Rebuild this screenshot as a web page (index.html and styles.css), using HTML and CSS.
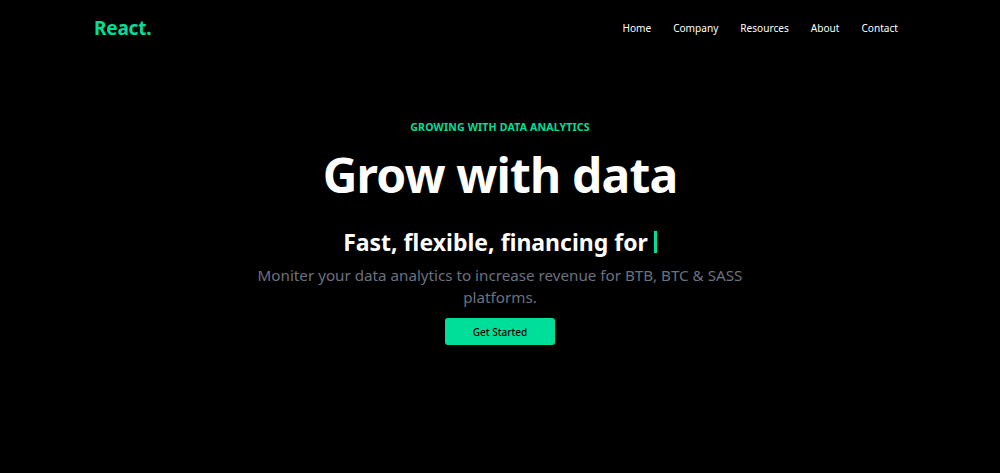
FILE: index.html
```html
<!DOCTYPE html>
<html>
<head>
<meta charset="utf-8">
<link rel="stylesheet" href="styles.css">
</head>
<body>
<header class="nav">
  <h1 class="logo">React.</h1>
  <ul class="links">
    <li>Home</li>
    <li>Company</li>
    <li>Resources</li>
    <li>About</li>
    <li>Contact</li>
  </ul>
</header>
<main class="hero">
  <p class="eyebrow">GROWING WITH DATA ANALYTICS</p>
  <h2 class="title">Grow with data</h2>
  <div class="sub">Fast, flexible, financing for <span class="cursor"></span></div>
  <p class="desc">Moniter your data analytics to increase revenue for BTB, BTC &amp; SASS platforms.</p>
  <button class="cta">Get Started</button>
</main>
</body>
</html>
```
FILE: styles.css
```css
* { box-sizing: border-box; }
html, body { margin: 0; padding: 0; background: #000; height: 100%; }
body { font-family: "Noto Sans", "Open Sans", sans-serif; color: #fff; }
.nav {
  display: flex;
  justify-content: space-between;
  align-items: center;
  height: 55px;
  padding: 0 102px 0 94px;
}
.logo {
  margin: 0;
  color: #00df9a;
  font-size: 19px;
  font-weight: 700;
  letter-spacing: -0.2px;
}
.links {
  display: flex;
  list-style: none;
  margin: 0;
  padding: 0;
  gap: 22px;
  font-size: 10.1px;
}
.hero {
  display: flex;
  flex-direction: column;
  align-items: center;
  text-align: center;
  padding-top: 64px;
}
.eyebrow {
  margin: 0;
  color: #00df9a;
  font-size: 10.5px;
  font-weight: 700;
  line-height: 16px;
  letter-spacing: 0.2px;
}
.title {
  margin: 12px 0 0;
  font-size: 48px;
  font-weight: 700;
  line-height: 56px;
  letter-spacing: -0.85px;
}
.sub {
  margin-top: 25px;
  font-size: 23px;
  font-weight: 700;
  line-height: 28px;
  display: flex;
  align-items: center;
  gap: 6px;
}
.cursor {
  display: inline-block;
  width: 3px;
  height: 22px;
  background: #00df9a;
}
.desc {
  margin: 8px 0 0;
  max-width: 500px;
  color: #6b7280;
  font-size: 15.2px;
  line-height: 22px;
}
.cta {
  margin-top: 10px;
  width: 110px;
  height: 27px;
  border: none;
  border-radius: 3px;
  background: #00df9a;
  color: #000;
  font-family: inherit;
  font-size: 10px;
  font-weight: 500;
}
```
